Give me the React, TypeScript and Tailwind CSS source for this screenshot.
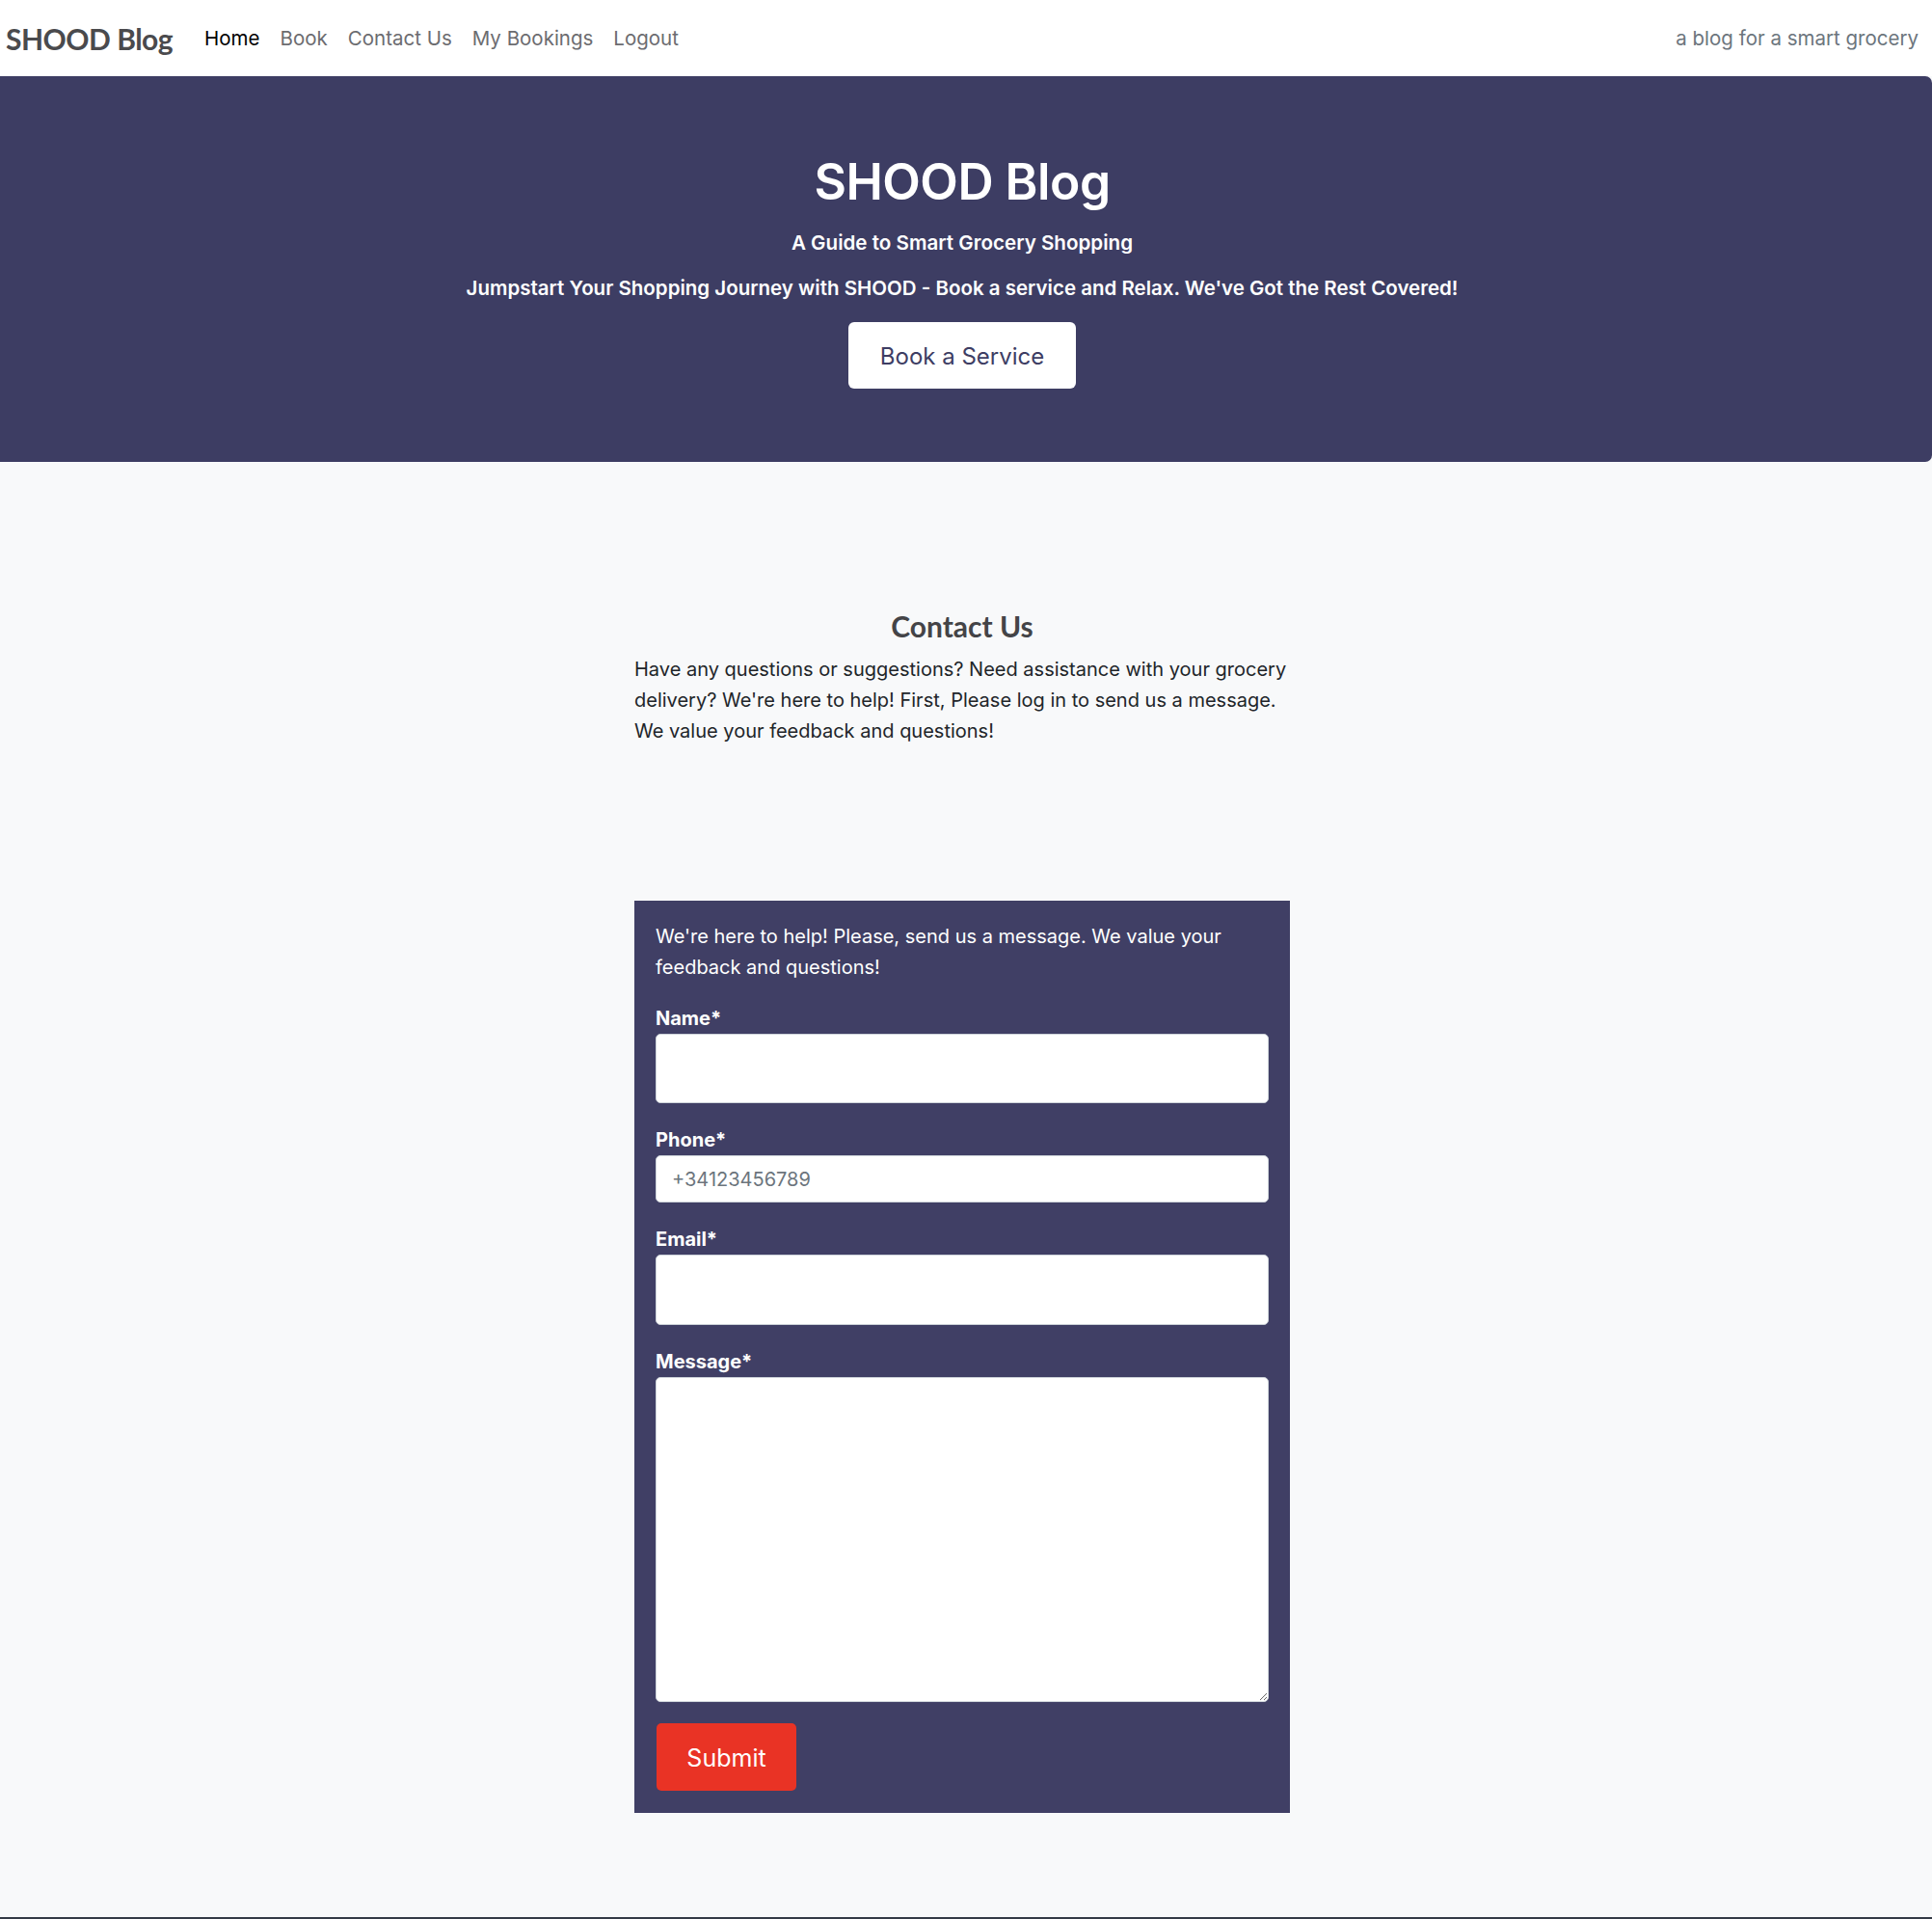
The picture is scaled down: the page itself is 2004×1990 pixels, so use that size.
const links = [
  { label: "Home", active: true },
  { label: "Book" },
  { label: "Contact Us" },
  { label: "My Bookings" },
  { label: "Logout" },
];

const fields = [
  { label: "Name*", h: "h-[72px]" },
  { label: "Phone*", h: "h-[49px]", placeholder: "+34123456789" },
  { label: "Email*", h: "h-[73px]" },
];

export default function App() {
  return (
    <div className="min-h-screen bg-[#f8f9fa] font-['Inter',sans-serif] text-[#212529]">
      <nav className="h-[79px] bg-white flex items-center justify-between pl-[6px] pr-[14px] pt-[2px]">
        <div className="flex items-center">
          <a className="font-['Lato',sans-serif] font-bold text-[30px] text-[#4a4a4d] tracking-[-0.5px] mr-[33px]">
            SHOOD Blog
          </a>
          <ul className="flex items-center gap-[21px] text-[20.5px]">
            {links.map((l) => (
              <li key={l.label} className={l.active ? "text-black" : "text-[#6c6c70]"}>
                {l.label}
              </li>
            ))}
          </ul>
        </div>
        <span className="text-[20.5px] text-[#6c757d]">a blog for a smart grocery</span>
      </nav>

      <header className="h-[400px] bg-[#3d3d63] rounded-r-[7px] text-white flex flex-col items-center pt-[79px] pr-[8px]">
        <h1 className="text-[51.5px] leading-[60px] font-semibold tracking-[-0.5px]">SHOOD Blog</h1>
        <p className="text-[20.6px] leading-[30px] font-semibold mt-[19px]">A Guide to Smart Grocery Shopping</p>
        <p className="text-[20.5px] leading-[30px] font-semibold mt-[17px]">
          Jumpstart Your Shopping Journey with SHOOD - Book a service and Relax. We've Got the Rest Covered!
        </p>
        <button className="mt-[20px] w-[236px] h-[69px] bg-white rounded-[6px] text-[24px] pt-[3px] text-[#3d3d63]">
          Book a Service
        </button>
      </header>

      <section className="pt-[152px] pr-[8px] flex flex-col items-center">
        <div className="w-[680px]">
          <h2 className="font-['Lato',sans-serif] font-bold text-[30px] leading-[36px] text-[#444447] text-center">
            Contact Us
          </h2>
          <p className="mt-[11px] text-[20px] leading-[32px]">
            Have any questions or suggestions? Need assistance with your grocery delivery? We're here to help! First, Please log in to send us a message. We value your feedback and questions!
          </p>

          <form className="mt-[160px] bg-[#403f65] px-[22px] pt-[21px] pb-[23px] text-white">
            <p className="text-[20px] leading-[32px] pr-[40px]">
              We're here to help! Please, send us a message. We value your feedback and questions!
            </p>
            <div className="mt-[21px] flex flex-col gap-[22px]">
              {fields.map((f) => (
                <div key={f.label}>
                  <label className="block text-[20px] leading-[32px] font-bold">{f.label}</label>
                  <input
                    placeholder={f.placeholder}
                    className={`block w-full ${f.h} bg-white rounded-[5px] border border-[#ced4da] px-[16px] text-[20px] text-[#212529] placeholder:text-[#6c757d]`}
                  />
                </div>
              ))}
              <div>
                <label className="block text-[20px] leading-[32px] font-bold">Message*</label>
                <textarea className="block w-full h-[337px] bg-white rounded-[5px] border border-[#ced4da] px-[16px] py-[8px] text-[20px]" />
              </div>
            </div>
            <button className="mt-[22px] ml-[1px] w-[145px] h-[70px] bg-[#e93325] rounded-[5px] text-[25px] pt-[3px] text-white">
              Submit
            </button>
          </form>
        </div>
      </section>

      <div className="mt-[108px] h-[40px] bg-[#343a46]" />
    </div>
  );
}
